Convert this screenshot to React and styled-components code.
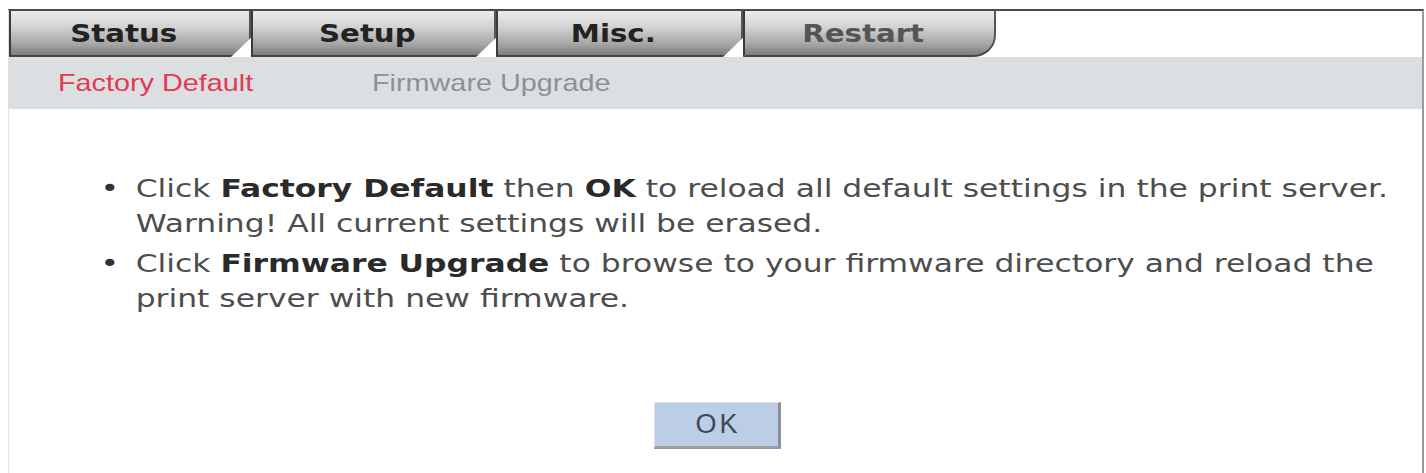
import React from "react";
import styled, { createGlobalStyle } from "styled-components";

const Global = createGlobalStyle`
  html, body { margin: 0; padding: 0; background: #ffffff; overflow: hidden; }
  body { font-family: "DejaVu Sans", Verdana, sans-serif; }
`;

const Frame = styled.div`
  margin: 9px 0 0 8px;
  width: 1413px;
  border-top: 2px solid #4a4a4a;
  border-right: 2px solid #9a9a9a;
  border-left: 1px solid #e2e2e2;
  background: #ffffff;
  min-height: 470px;
`;

const TabBar = styled.div`
  display: flex;
  height: 46px;
  background: #ffffff;
`;

const Tab = styled.div`
  width: ${(p) => p.$w}px;
  height: 46px;
  box-sizing: border-box;
  display: flex;
  align-items: center;
  justify-content: center;
  padding-right: 12px;
  background: linear-gradient(#ececec 0%, #d4d4d4 35%, #a6a6a6 75%, #7c7c7c 100%);
  border-left: 2px solid #3a3a3a;
  border-right: 2px solid #555;
  border-bottom: 2px solid #444;
  clip-path: ${(p) =>
    p.$last
      ? "none"
      : "polygon(0 0, 100% 0, 100% 58%, calc(100% - 20px) 100%, 0 100%)"};
  border-bottom-right-radius: ${(p) => (p.$last ? "22px" : "0")};
  font-family: "DejaVu Sans", Verdana, sans-serif;
  font-weight: bold;
  font-size: 25px;
  color: ${(p) => (p.$dim ? "#555555" : "#222222")};
`;

const TabLabel = styled.span`
  display: inline-block;
  transform: scaleX(1.17);
`;

const SubNav = styled.div`
  height: 52px;
  background: #dcdfe1;
  display: flex;
  align-items: center;
  padding-left: 49px;
  gap: 151px;
`;

const SubLink = styled.span`
  display: inline-block;
  transform: scaleX(1.2);
  transform-origin: left center;
  font-family: "Liberation Sans", Arial, sans-serif;
  font-size: 24px;
  color: ${(p) => (p.$active ? "#e23a52" : "#8d9094")};
`;

const Content = styled.div`
  padding: 62px 0 0 89px;
`;

const List = styled.div`
  width: max-content;
  display: flex;
  flex-direction: column;
  gap: 5px;
  font-size: 25px;
  line-height: 35px;
  color: #4d4d4d;
  transform: scaleX(1.255);
  transform-origin: left top;
`;

const Item = styled.div`
  display: flex;
  b { color: #2a2a2a; }
`;

const Bullet = styled.span`
  width: 28px;
  padding-left: 2px;
  flex: none;
  color: #333;
`;

const ButtonRow = styled.div`
  display: flex;
  justify-content: center;
  padding: 86px 0 0 4px;
`;

const OkButton = styled.button`
  width: 127px;
  height: 47px;
  background: #bccde6;
  border: none;
  border-right: 3px solid #8c8f95;
  border-bottom: 3px solid #9a9da2;
  border-top: 1px solid #dbe4f2;
  border-left: 1px solid #dbe4f2;
  font-family: "Liberation Sans", Arial, sans-serif;
  font-size: 27px;
  letter-spacing: 3px;
  color: #3a4858;
  padding: 0 0 0 3px;
`;

export default function App() {
  return (
    <>
      <Global />
      <Frame>
        <TabBar>
          <Tab $w={242}><TabLabel>Status</TabLabel></Tab>
          <Tab $w={245}><TabLabel>Setup</TabLabel></Tab>
          <Tab $w={247}><TabLabel>Misc.</TabLabel></Tab>
          <Tab $w={253} $last $dim><TabLabel>Restart</TabLabel></Tab>
        </TabBar>
        <SubNav>
          <SubLink $active>Factory Default</SubLink>
          <SubLink>Firmware Upgrade</SubLink>
        </SubNav>
        <Content>
          <List>
            <Item>
              <Bullet>•</Bullet>
              <span>
                Click <b>Factory Default</b> then <b>OK</b> to reload all default settings in the print server.
                <br />
                Warning! All current settings will be erased.
              </span>
            </Item>
            <Item>
              <Bullet>•</Bullet>
              <span>
                Click <b>Firmware Upgrade</b> to browse to your firmware directory and reload the
                <br />
                print server with new firmware.
              </span>
            </Item>
          </List>
        </Content>
        <ButtonRow>
          <OkButton>OK</OkButton>
        </ButtonRow>
      </Frame>
    </>
  );
}
